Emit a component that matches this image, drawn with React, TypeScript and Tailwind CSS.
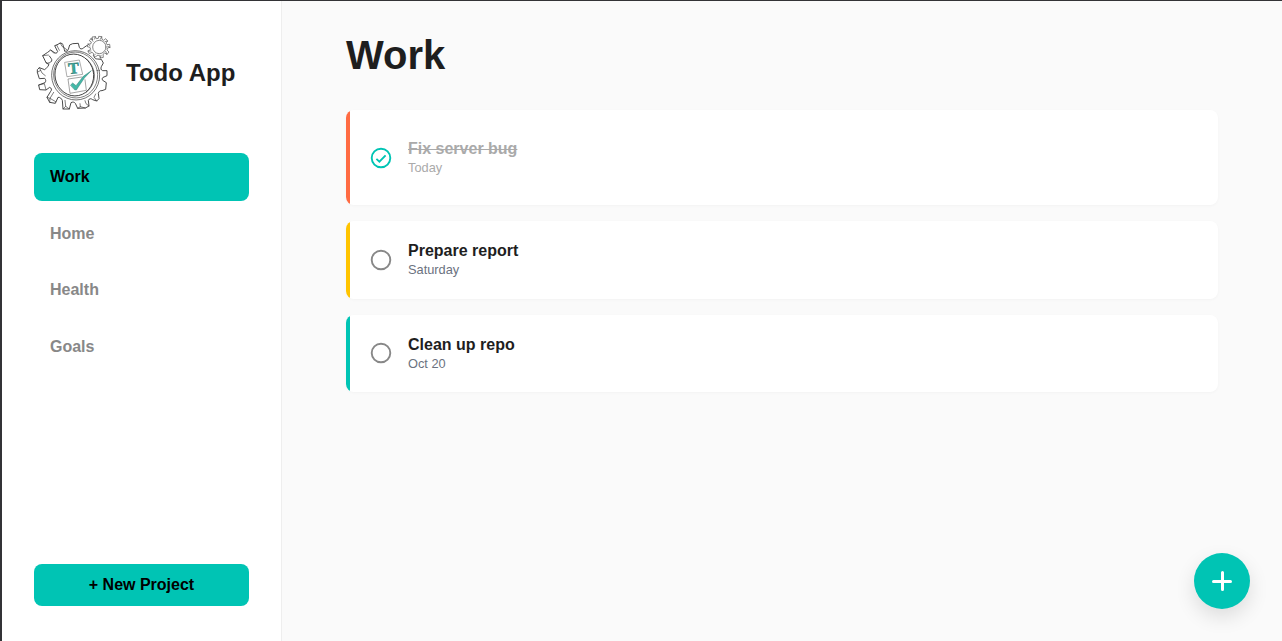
import React from "react";

type Task = { title: string; due: string; done?: boolean; height: string; bar: string; icon: string };

const projects = ["Work", "Home", "Health", "Goals"];

const tasks: Task[] = [
  { title: "Fix server bug", due: "Today", done: true, height: "h-[95px]", bar: "bg-[#ff6b42]", icon: "" },
  { title: "Prepare report", due: "Saturday", height: "h-[78px]", bar: "bg-[#ffc400]", icon: "" },
  { title: "Clean up repo", due: "Oct 20", height: "h-[77px]", bar: "bg-[#00c4b4]", icon: "mb-px" },
];

function Logo() {
  return (
    <svg className="h-20 w-20 shrink-0" viewBox="12 9 240 240" fill="none" stroke="#3c3c3c" strokeWidth="2.8" strokeLinejoin="round" strokeLinecap="round">
      {/* large gear: front outline */}
      <path d="M104 63 C101 50 99 44 97 41 L91 39 L80 45 L74 47 L83 65 C81 70 76 71 72 67 L62 60 L53 67 L38 77 L48 98 C55 102 61 98 65 93 C67 87 61 83 58 78 M48 98 L57 104 C53 111 48 116 44 119 L28 113 L22 119 L22 127 L28 146 L44 145 C48 149 48 154 45 158 L26 165 L29 179 L48 180 L59 172 C65 174 66 180 62 184 L51 202 L59 217 L76 220 L84 202 C91 201 94 206 97 211 L99 237 L118 237 L123 218 C128 215 133 216 136 220 L143 235 L166 234 L177 228 L175 211 C178 205 183 205 188 209 L200 213 L207 206 L205 190 C206 184 211 181 216 182 L227 178 L229 158 L218 151 C215 146 217 142 222 141 L231 137 L231 122 L218 122 C212 120 212 115 214 110 L220 99 L214 88 L202 87 C197 87 194 85 193 82" />
      <path d="M104 63 C110 66 114 62 115 58 L119 45 L128 41 L145 40 L148 52 C150 58 156 58 160 54 L170 47 L181 49" />
      {/* large gear: tooth sides */}
      <path d="M91 39 L96 49 L112 60 M80 45 L88 61 M62 60 L72 70 M38 77 L55 75 M28 113 L36 129 L46 137 M22 127 L32 121 M26 165 L43 161 L48 179 M51 202 L60 205 L77 215 M59 217 L60 205 L71 187 M99 237 L107 229 L118 237 M107 229 L105 211 M143 235 L151 230 L166 234 M151 230 L150 221 M177 228 L168 221 L165 212 M200 213 L192 202 L197 192" strokeWidth="2" />
      <ellipse cx="137" cy="136" rx="72" ry="74" strokeWidth="2" transform="rotate(-12 137 136)" />
      <ellipse cx="137" cy="135" rx="66" ry="69" strokeWidth="1.8" transform="rotate(-12 137 135)" />
      <ellipse cx="133" cy="135" rx="58" ry="63" strokeWidth="2.7" transform="rotate(-12 133 135)" />
      <path d="M170 87 C202 118 202 159 168 188" strokeWidth="1.7" />
      {/* checklist tiles */}
      <path d="M105 97 L148 90 L158 133 L112 140 Z" strokeWidth="1.8" stroke="#777" />
      <path d="M165 149 L169 181 L120 190 L114 147 L156 141" strokeWidth="1.8" stroke="#666" />
      <text x="131" y="131" textAnchor="middle" transform="rotate(-5 131 116)" className="font-['Liberation_Serif',serif] text-[48px] font-bold" fill="#37ac9e" stroke="#367f76" strokeWidth="1.6">T</text>
      <path d="M122 165 L128 159 L138 167 L160 139 L184 122 L163 144 L139 180 L134 179 Z" fill="#43b9a8" stroke="#367f76" strokeWidth="1.6" />
      {/* small gear */}
      <g strokeWidth="2.1" stroke="#555">
        <path fill="white" d="M188 29 L186 21 L196 20 L199 26 L205 25 L206 19 L215 20 L216 28 L221 31 L227 26 L233 33 L228 39 L231 44 L239 43 L240 52 L232 54 L231 60 L237 66 L231 73 L224 69 L219 73 L220 82 L211 84 L208 76 L201 76 L197 81 L190 78 L191 71 L186 67 L178 71 L174 63 L182 58 L180 52 L172 50 L174 42 L182 42 L184 36 L178 32 L183 26 Z" />
        <ellipse cx="208" cy="51" rx="20" ry="20" />
        <path d="M196 20 L194 27 M215 20 L211 28 M233 33 L225 35 M240 52 L233 49 M231 73 L227 64 M211 84 L213 76 M190 78 L196 73 M174 63 L183 63 M174 42 L180 47 M183 26 L189 34" />
      </g>
    </svg>
  );
}

function StatusIcon({ done }: { done?: boolean }) {
  return (
    <svg className={done ? "size-6 text-[#00c4b4]" : "size-6 text-[#888888]"} viewBox="0 0 24 24" fill="none" stroke="currentColor" strokeWidth="1.9">
      <circle cx="12" cy="12" r="9.3" />
      {done && <path d="m7.4 12.9 3 2.7 6.2-6.2" />}
    </svg>
  );
}

export default function App() {
  return (
    <div className="flex h-screen w-full overflow-hidden border-l-2 border-t border-l-[#333336] border-t-[#333336] bg-[#fafafa] font-['Liberation_Sans',Arial,sans-serif] text-[#1e1e1e]">
      <aside className="flex w-[280px] shrink-0 flex-col border-r border-[#eeeeee] bg-white px-8 pb-[35px] pt-8">
        <div className="flex items-center gap-3">
          <Logo />
          <h1 className="whitespace-nowrap text-2xl font-bold">Todo App</h1>
        </div>
        <nav className="mt-10 flex flex-col gap-[8.5px]">
          {projects.map((name, i) => (
            <button key={name} className={i === 0
              ? "h-12 rounded-lg bg-[#00c4b4] px-4 text-left font-bold text-black"
              : "h-12 rounded-lg px-4 text-left font-bold text-[#888888]"}>
              {name}
            </button>
          ))}
        </nav>
        <button className="mt-auto h-[42px] rounded-lg bg-[#00c4b4] font-bold text-black">+ New Project</button>
      </aside>
      <main className="min-w-0 flex-1 px-16 pt-[31px]">
        <h2 className="text-[40px] font-bold leading-[46px]">Work</h2>
        <div className="mt-8 flex flex-col gap-4">
          {tasks.map((task) => (
            <article key={task.title} className={`flex items-center overflow-hidden rounded-lg bg-white shadow-[0_1px_3px_rgba(0,0,0,0.03)] ${task.height}`}>
              <div className={`mr-[19px] w-1 self-stretch ${task.bar}`} />
              <div className={`mr-[15px] ${task.icon}`}>
                <StatusIcon done={task.done} />
              </div>
              <div className={task.done ? "text-[#aaaaaa]" : ""}>
                <div className={task.done ? "text-base font-bold leading-[19px] line-through" : "text-base font-bold leading-[19px]"}>{task.title}</div>
                <div className={task.done ? "text-[12.8px] leading-[19px]" : "text-[12.8px] leading-[19px] text-[#6b7280]"}>{task.due}</div>
              </div>
            </article>
          ))}
        </div>
      </main>
      <button aria-label="Add task" className="fixed bottom-8 right-8 flex size-14 items-center justify-center rounded-full bg-[#00c4b4] text-white shadow-[0_8px_20px_rgba(0,0,0,0.12)]">
        <svg className="size-6" viewBox="0 0 24 24" fill="none" stroke="currentColor" strokeWidth="3" strokeLinecap="round">
          <path d="M12.5 3.5v17M3.5 12.5h17" />
        </svg>
      </button>
    </div>
  );
}
